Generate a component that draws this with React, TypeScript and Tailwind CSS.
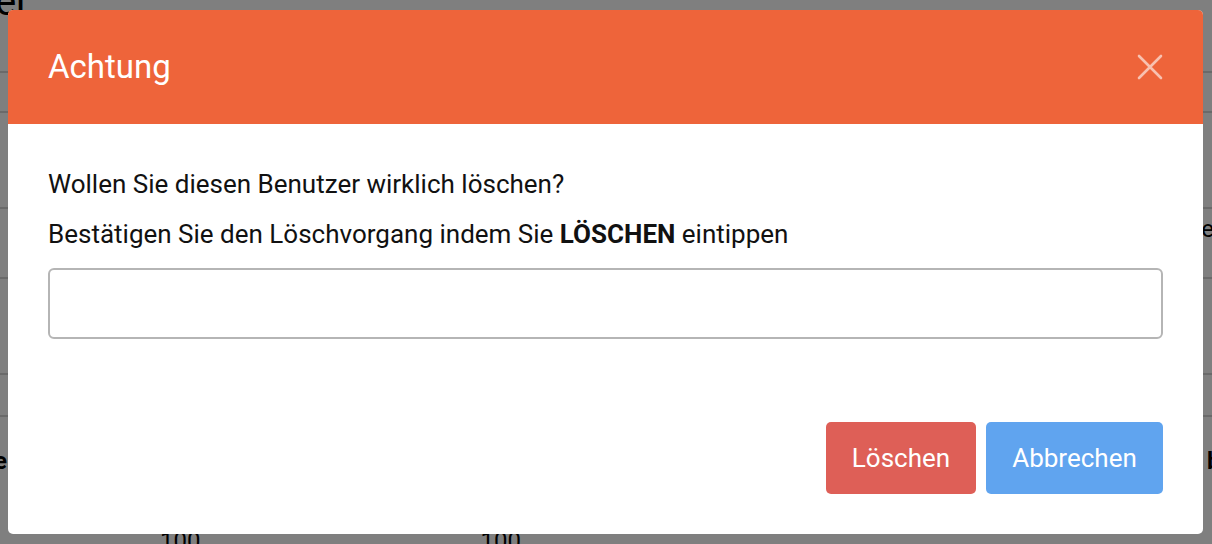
import { useState } from 'react';

function CloseIcon() {
  return (
    <svg width="26" height="26" viewBox="0 0 26 26" fill="none" stroke="currentColor" strokeWidth="2.6" strokeLinecap="round">
      <path d="M2 2L24 24M24 2L2 24" />
    </svg>
  );
}

function BackgroundPage() {
  return (
    <div className="flex flex-col text-black">
      <div className="ml-[-128px] mt-[-22px] h-[93px] text-[40px] leading-[48px]">Benutzer</div>
      <div className="h-[40px] border-t-2 border-[#d4d4d4]" />
      <div className="h-[96px] border-t-2 border-[#d4d4d4]" />
      <div className="flex h-[70px] items-start justify-end border-t-2 border-[#d4d4d4] pt-[6px] text-[24px] leading-[28px]">
        <span className="mr-[-2px]">e</span>
      </div>
      <div className="h-[96px] border-t-2 border-[#d4d4d4]" />
      <div className="h-[42px] border-t-2 border-[#d4d4d4]" />
      <div className="flex h-[90px] items-center justify-between border-t-2 border-[#d4d4d4] text-[24px] font-bold">
        <span className="ml-[-6px]">e</span>
        <span className="mr-[-22px]">bo</span>
      </div>
      <div className="flex gap-[280px] pl-[160px] pt-[18px] text-[24px]">
        <span>100</span>
        <span>100</span>
      </div>
    </div>
  );
}

export default function App() {
  const [value, setValue] = useState('');

  return (
    <div className="relative h-[544px] w-[1212px] overflow-hidden bg-white font-['Roboto',sans-serif]">
      <BackgroundPage />
      <div className="absolute inset-0 flex items-start justify-center bg-black/50 pt-[10px]">
        <div className="ml-[-1px] flex h-[524px] w-[1195px] flex-col overflow-hidden rounded-[5px] bg-white">
          <div className="flex h-[114px] shrink-0 items-center justify-between bg-[#ee643a] pl-[40px] pr-[40px]">
            <h3 className="text-[33px] font-normal text-white">Achtung</h3>
            <button type="button" className="text-white/60">
              <CloseIcon />
            </button>
          </div>
          <div className="flex flex-1 flex-col px-[40px] pt-[46px] text-[26px] text-[#111]">
            <p className="leading-[28px]">Wollen Sie diesen Benutzer wirklich löschen?</p>
            <p className="mt-[22px] leading-[28px]">
              Bestätigen Sie den Löschvorgang indem Sie <strong className="font-bold">LÖSCHEN</strong> eintippen
            </p>
            <input
              value={value}
              onChange={(e) => setValue(e.target.value)}
              className="mt-[20px] h-[71px] w-full rounded-[6px] border-2 border-[#b5b5b5] px-3 outline-none"
            />
            <div className="mt-[83px] flex justify-end gap-[10px]">
              <button type="button" className="h-[72px] w-[150px] rounded-[5px] bg-[#de5f57] text-[26px] text-white">
                Löschen
              </button>
              <button type="button" className="h-[72px] w-[177px] rounded-[5px] bg-[#60a4ef] text-[26px] text-white">
                Abbrechen
              </button>
            </div>
          </div>
        </div>
      </div>
    </div>
  );
}
